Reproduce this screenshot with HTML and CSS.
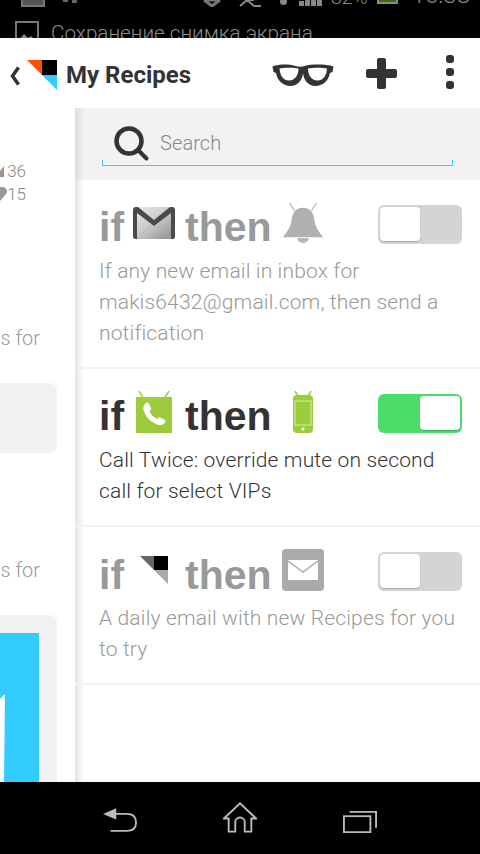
FILE: index.html
```html
<!DOCTYPE html>
<html lang="en">
<head>
<meta charset="utf-8">
<title>My Recipes</title>
<link rel="stylesheet" href="styles.css">
</head>
<body>
<div class="phone">
  <div class="status">
    <div class="status-top">
      <span class="st-left">
        <svg width="24" height="7" viewBox="0 0 24 7"><path d="M1 0v6h22V0" fill="#555" stroke="#777" stroke-width="2"/></svg>
        <svg class="st-mini" width="14" height="3" viewBox="0 0 14 3"><path d="M0 0h5v2H0zM9 0h5v3H9z" fill="#666"/></svg>
      </span>
      <span class="st-right">
        <svg width="59" height="7" viewBox="0 0 59 7"><path d="M1 0l8 6 8-6M3 0h12" fill="none" stroke="#777" stroke-width="3"/><path d="M37 6l7-6 7 6 7 0M44 0l7 0" fill="none" stroke="#888" stroke-width="2"/></svg>
        <svg class="st-dot" width="7" height="5" viewBox="0 0 7 5"><circle cx="3.500" cy="1.500" r="3.500" fill="#888"/></svg>
        <svg class="st-bars" width="23" height="6" viewBox="0 0 23 6"><path d="M0 1h5v5H0zM6 0h5v6H6zM12 0h5v6h-5zM18 0h5v6h-5z" fill="#888"/></svg>
        <span class="st-pct">82%</span>
        <svg class="st-bat" width="21" height="4" viewBox="0 0 21 4"><path d="M1 0v3h19V0" fill="#3d6b10" stroke="#888" stroke-width="2"/></svg>
        <span class="st-time">16:38</span>
      </span>
    </div>
    <div class="status-note">
      <svg width="24" height="24" viewBox="0 0 24 24"><rect x="1" y="1" width="22" height="22" fill="none" stroke="#777" stroke-width="2"/><path d="M3 20l6-7 4 4 3-2 5 5z" fill="#888"/></svg>
      <span>Сохранение снимка экрана</span>
    </div>
  </div>

  <header class="header">
    <svg class="back" width="12" height="20" viewBox="0 0 12 20"><path d="M9.500 1.500L3.500 10l6 8.500" fill="none" stroke="#333" stroke-width="3.500"/></svg>
    <svg class="logo" width="30" height="30" viewBox="0 0 30 30"><path d="M0 0h15v15z" fill="#ff4f00"/><path d="M15 0h15v15H15z" fill="#000"/><path d="M15 15h15v15z" fill="#33ccff"/></svg>
    <h1 class="title">My Recipes</h1>
    <svg class="act-glasses" width="62" height="24" viewBox="0.500 0 62 24"><path d="M1 3.500C8 1 17 1 24 3c3 1 6 1 9 0C40 1 55 1 62 3.500l-1 5.500-2.500 1C57 18 51 23 44 23 37 23 32 17 31.500 10 31 17 26 23 19 23 12 23 6 18 4.500 10L2 9z" fill="#333"/><path d="M8 5.500c5-1 14-1 19 0 0 6-3 12-9.500 12S8.500 11.500 8 5.500zM36.500 5.500c5-1 14-1 19 0-.5 6-3 12-9.500 12s-9.500-6-9.500-12z" fill="#fff"/></svg>
    <svg class="act-plus" width="31" height="31" viewBox="0 0 31 31"><path d="M11 2a2 2 0 012-2h5a2 2 0 012 2v9h9a2 2 0 012 2v5a2 2 0 01-2 2h-9v9a2 2 0 01-2 2h-5a2 2 0 01-2-2v-9H2a2 2 0 01-2-2v-5a2 2 0 012-2h9z" fill="#333"/></svg>
    <svg class="act-more" width="8" height="34" viewBox="0 0 8 34"><rect width="8" height="8" rx="3" fill="#333"/><rect y="13" width="8" height="8" rx="3" fill="#333"/><rect y="26" width="8" height="8" rx="3" fill="#333"/></svg>
  </header>

  <div class="main">
    <aside class="left">
      <div class="stat stat-first"><svg width="4" height="12" viewBox="0 0 4 12"><path d="M0 12V6l4-5v11z" fill="#999"/></svg>36</div>
      <div class="stat"><svg width="8" height="14" viewBox="0 0 8 14"><path d="M0 0h3a4.500 4.500 0 014.500 6.500L1 14H0z" fill="#999"/></svg>15</div>
      <p class="frag frag-one">s for</p>
      <div class="card card-small"></div>
      <p class="frag frag-two">s for</p>
      <div class="card card-big">
        <div class="hero"><svg width="6" height="90" viewBox="0 0 6 90"><path d="M0 6l5-5-1 89H0z" fill="#fff"/></svg></div>
      </div>
    </aside>

    <section class="right">
      <div class="search">
        <div class="search-field">
          <svg width="36" height="36" viewBox="0 0 36 36"><circle cx="15" cy="15" r="12.500" fill="none" stroke="#333" stroke-width="4.500"/><path d="M25 25l7.500 7.500" stroke="#333" stroke-width="4" stroke-linecap="round"/></svg>
          <span>Search</span>
        </div>
      </div>

      <article class="row row-off row-one">
        <div class="row-top">
          <div class="ifthen">
            <span class="kw">if</span>
            <svg class="ic-gmail" width="42" height="32" viewBox="0 0 42 32"><defs><linearGradient id="gm" x1="0" y1="0" x2="1" y2="1"><stop offset="0" stop-color="#eee"/><stop offset=".5" stop-color="#c8c8c8"/><stop offset="1" stop-color="#8a8a8a"/></linearGradient></defs><rect width="42" height="32" rx="3" fill="url(#gm)"/><path d="M4 31L21 15 38 31" fill="none" stroke="#b5b5b5"/><path d="M0 3a3 3 0 013-3h2l16 13L37 0h2a3 3 0 013 3v26a3 3 0 01-3 3h-1V6L21 19 4 6v26H3a3 3 0 01-3-3z" fill="#4a4a4a"/></svg>
            <span class="kw">then</span>
            <svg class="ic-bell" width="40" height="42" viewBox="0 0 42 42"><path d="M7 0l5 8M35 0l-5 8" stroke="#c4c4b4" stroke-width="1.500"/><path d="M21 5c7 0 11 4 12 13 1 7 4 11 9 18H0c5-7 8-11 9-18C10 9 14 5 21 5z" fill="#b0b0b0"/><path d="M15 37h12a6 5 0 01-12 0z" fill="#b0b0b0"/><path d="M15.500 38a6 4 0 0011 0" fill="none" stroke="#b9c98f" stroke-width="1.500"/></svg>
          </div>
          <div class="toggle toggle-off"><span class="knob"></span></div>
        </div>
        <p class="desc">If any new email in inbox for makis6432@gmail.com, then send a notification</p>
      </article>

      <article class="row row-on row-two">
        <div class="row-top">
          <div class="ifthen">
            <span class="kw">if</span>
            <svg class="ic-phone" width="36" height="42" viewBox="0 0 36 42"><path d="M3 0l5 8M33 0l-5 8" stroke="#9ccc3c" stroke-width="1.500"/><path d="M0 6h36v36H0z" fill="#9ccc3c"/><path d="M9 13c2-2 3-2 4 0l2 4c.5 1 0 2-1.500 3 1 3 4 6 7.500 8 1-1.500 2-2 3-1.500l4 2c2 1 2 2 0 4-2 2-5 2-9 0-6-3-9-7-11-12-1-3-1-5 1-7.500z" fill="#fff"/></svg>
            <span class="kw">then</span>
            <svg class="ic-device" width="20" height="42" viewBox="0 0 20 42"><path d="M2 0l3 5M18 0l-3 5" stroke="#9ccc3c" stroke-width="1.500"/><rect y="4" width="20" height="38" rx="4" fill="#9ccc3c"/><rect x="2" y="10" width="16" height="24" fill="none" stroke="#d8ecb0"/><circle cx="10" cy="38" r="1.500" fill="#fff"/></svg>
          </div>
          <div class="toggle toggle-on"><span class="knob"></span></div>
        </div>
        <p class="desc">Call Twice: override mute on second call for select VIPs</p>
      </article>

      <article class="row row-off row-three">
        <div class="row-top">
          <div class="ifthen">
            <span class="kw">if</span>
            <svg class="ic-ifttt" width="28" height="28" viewBox="0 0 28 28"><path d="M0 0h14v14z" fill="#666"/><path d="M14 0h14v14H14z" fill="#000"/><path d="M14 14h14v14z" fill="#aaa"/></svg>
            <span class="kw">then</span>
            <svg class="ic-mail" width="42" height="42" viewBox="0 0 42 42"><rect width="42" height="42" rx="4" fill="#aaa"/><path d="M6 11h30v20H6z" fill="#fff"/><path d="M6 12l15 11 15-11" fill="none" stroke="#aaa" stroke-width="1.500"/></svg>
          </div>
          <div class="toggle toggle-off"><span class="knob"></span></div>
        </div>
        <p class="desc">A daily email with new Recipes for you to try</p>
      </article>
    </section>
  </div>

  <nav class="navbar">
    <svg width="34" height="25" viewBox="0 0 36 26"><path d="M0 6l14-6v12z" fill="#bbb"/><path d="M10 6h15c7 0 10 4 10 9s-3 9-10 9H8" fill="none" stroke="#bbb" stroke-width="2"/></svg>
    <svg width="34" height="31" viewBox="0 0 36 32"><path d="M1 17L18 1l17 16h-5v14h-7V21a5 5 0 00-10 0v10H6V17z" fill="none" stroke="#bbb" stroke-width="2"/></svg>
    <svg width="34" height="23" viewBox="0 0 36 26" preserveAspectRatio="none"><rect x="1" y="7" width="28" height="18" fill="none" stroke="#bbb" stroke-width="2"/><path d="M7 2h28v18" fill="none" stroke="#bbb" stroke-width="2"/></svg>
  </nav>
</div>
</body>
</html>
```
FILE: styles.css
```css
* { box-sizing: border-box; }
html, body { margin: 0; padding: 0; }
body { font-family: Roboto, "Liberation Sans", sans-serif; background: #000; }
.phone { width: 480px; height: 854px; display: flex; flex-direction: column; overflow: hidden; background: #fff; }

.status { height: 38px; flex: none; background: #000; overflow: hidden; display: flex; flex-direction: column; }
.status-top { height: 21px; flex: none; display: flex; justify-content: space-between; align-items: flex-start; padding-left: 21px; color: #888; }
.st-left { display: flex; align-items: flex-start; gap: 18px; }
.st-right { display: flex; align-items: flex-start; height: 10px; }
.st-dot { margin-left: 18px; }
.st-bars { margin-left: 12px; }
.st-pct { font-size: 20px; line-height: 20px; margin: -13px 0 0 9px; font-weight: 300; width: 37px; }
.st-bat { margin-left: 9px; }
.st-time { font-size: 24px; line-height: 24px; margin: -17px 10px 0 14px; font-weight: 300; }
.status-note { display: flex; align-items: flex-start; gap: 12px; padding-left: 15px; color: #8c8c8c; font-size: 20.700px; line-height: 24px; font-weight: 300; white-space: nowrap; }

.header { height: 70px; flex: none; background: #fff; display: flex; align-items: center; }
.back { margin: 5px 0 0 9px; flex: none; }
.logo { margin: 3px 0 0 6px; flex: none; }
.title { margin: 4px 0 0 9px; flex: 1; font-size: 24px; font-weight: 700; color: #333; line-height: 30px; }
.act-glasses { flex: none; margin: 4px 32px 0 0; }
.act-plus { flex: none; margin: 1px 49px 0 0; }
.act-more { flex: none; margin: -2px 26px 0 0; }

.main { flex: 1; min-height: 0; display: flex; }

.left { width: 75px; flex: none; overflow: hidden; display: flex; flex-direction: column; align-items: flex-end; background: #fff; color: #999; }
.left > * { flex: none; }
.stat { display: flex; align-items: center; height: 23px; font-size: 17px; font-weight: 300; margin-right: 49px; color: #888; gap: 3px; }
.stat + .stat { gap: 0; }
.stat-first { margin-top: 51px; }
.frag { margin: 0; font-size: 20px; line-height: 30px; font-weight: 300; color: #999; white-space: nowrap; margin-right: 35px; }
.frag-one { margin-top: 118px; }
.card { width: 57px; margin-right: 18px; background: #f2f2f2; border-radius: 0 8px 8px 0; }
.card-small { height: 70px; margin-top: 30px; }
.frag-two { margin-top: 102px; }
.card-big { height: 180px; margin-top: 30px; padding-top: 18px; }
.hero { width: 39px; height: 162px; background: #33ccff; padding-top: 60px; }
.hero svg { display: block; }

.right { flex: 1; min-width: 0; background: linear-gradient(90deg, #e4e4e4, #fbfbfb 8px, #fff 10px); }
.search { height: 72px; background: linear-gradient(90deg, #dcdcdc, #f0f0f0 8px, #f2f2f2 10px); padding: 17px 27px 0; }
.search-field { height: 41px; display: flex; align-items: flex-start; gap: 10px; padding: 1px 0 0 12px; border-bottom: 1px solid #33ccff; position: relative; font-size: 20px; letter-spacing: .1px; font-weight: 300; color: #888; line-height: 34px; }
.search-field::before, .search-field::after { content: ""; position: absolute; bottom: 0; width: 1px; height: 5px; background: #33ccff; }
.search-field::before { left: 0; }
.search-field::after { right: 0; }

.row { border-bottom: 2px solid #f2f2f2; padding: 0 18px 0 24px; }
.row-one { height: 189px; padding-top: 24px; }
.row-two { height: 158px; padding-top: 24px; }
.row-three { height: 158px; padding-top: 24px; }
.row-top { display: flex; justify-content: space-between; align-items: flex-start; height: 46px; }
.ifthen { display: flex; align-items: flex-start; }
.kw { font-family: "Liberation Sans", Roboto, sans-serif; font-size: 41px; line-height: 46px; font-weight: 700; color: #333; }
.row-off .kw { color: #999; }
.row-three .kw { margin-top: 1px; }
.ic-gmail { margin: 3px 10px 0 9px; }
.ic-bell { margin: -2px 0 0 11px; }
.ic-phone { margin: -2px 13px 0 12px; }
.ic-device { margin: -2px 0 0 21px; }
.ic-ifttt { margin: 5px 17px 0 16px; }
.ic-mail { margin: -2px 0 0 10px; }

.toggle { width: 84px; height: 39px; border-radius: 6px; flex: none; margin-top: 1px; padding: 2px; display: flex; }
.knob { width: 40px; height: 34px; background: #fff; border-radius: 4px; box-shadow: 0 1px 1px rgba(0,0,0,.2); }
.toggle-off { background: #d4d4d4; }
.toggle-on { background: #4cdc6a; justify-content: flex-end; }

.desc { margin: 0; font-size: 21px; letter-spacing: .15px; line-height: 31px; font-weight: 300; color: #333; }
.row-one .desc { margin-top: 6px; }
.row-two .desc { margin-top: 6px; }
.row-three .desc { margin-top: 6px; }
.row-off .desc { color: #999; }

.navbar { height: 72px; flex: none; background: #000; display: flex; align-items: flex-end; gap: 86px; padding: 0 0 21px 103px; }
```
